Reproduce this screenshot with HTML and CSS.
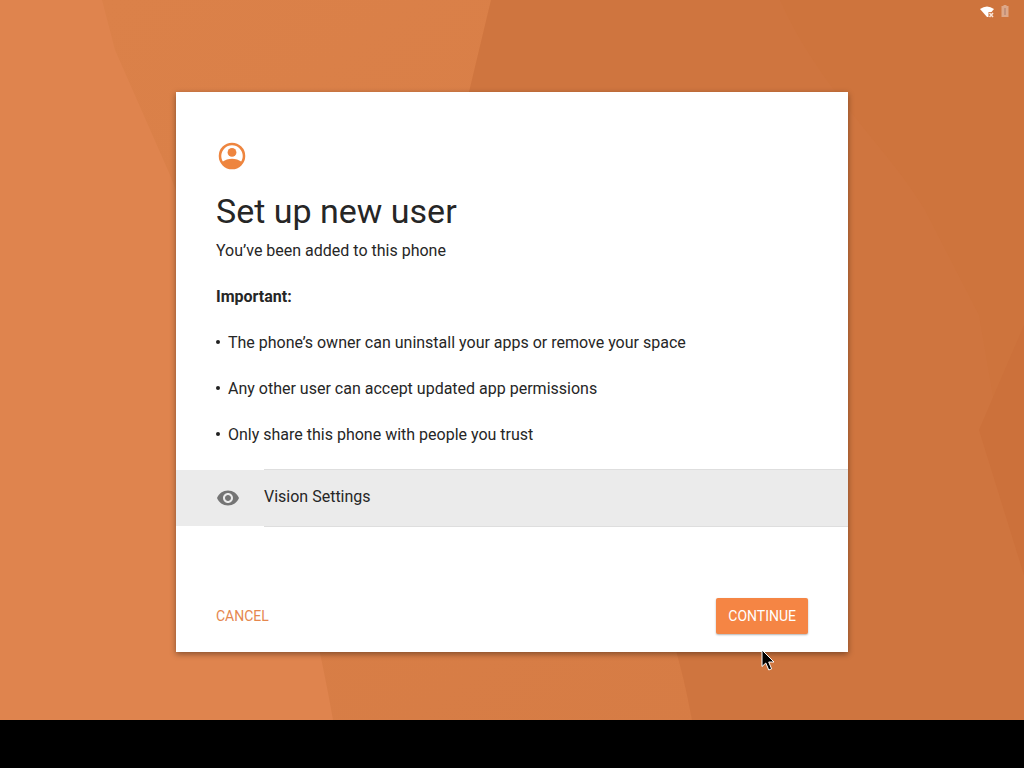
FILE: index.html
```html
<!DOCTYPE html>
<html lang="en">
<head>
<meta charset="utf-8">
<meta name="viewport" content="width=device-width, initial-scale=1">
<title>Set up new user</title>
<link rel="stylesheet" href="styles.css">
</head>
<body class="screen">
<svg class="wallpaper" viewBox="0 0 1024 720" preserveAspectRatio="none" aria-hidden="true">
  <defs>
    <linearGradient id="mid" x1="0" y1="0" x2="1" y2="1">
      <stop offset="0" stop-color="#db8149"/>
      <stop offset="1" stop-color="#d57b44"/>
    </linearGradient>
  </defs>
  <rect width="1024" height="720" fill="#df844e"/>
  <path d="M102 0L115 50L170 175C235 345 302 540 333 720H1024V0Z" fill="url(#mid)"/>
  <path d="M491 0L469 92L440 190C560 380 660 540 692 720H1024V0Z" fill="#cf753f"/>
  <path d="M780 0C820 90 890 150 925 210L979 315L1024 575V0Z" fill="#ce743d"/>
  <path d="M1024 325L979 430L1024 575Z" fill="#cc713b"/>
</svg>
<header class="status-bar">
  <svg class="status-icon" viewBox="0 0 16 16" width="16" height="16" role="img" aria-label="No Wi-Fi connection">
    <path d="M1 6Q8 1 15 6L12.500 9H9.500V14L8 14Z" fill="#fff"/>
    <path d="M10.500 10L14 14M14 10L10.500 14" stroke="#fbe5d8" stroke-width="1.500"/>
  </svg>
  <svg class="status-icon" viewBox="0 0 8 16" width="8" height="16" role="img" aria-label="Battery unknown">
    <path d="M2.500 2H5.500V3H7.500V14H.5V3H2.500Z" fill="#dda788"/>
    <path d="M4 5V12" stroke="#b98a76" stroke-width="1.500"/>
  </svg>
</header>
<main class="stage">
  <section class="card" aria-labelledby="title">
    <div class="content">
      <svg class="user-icon" viewBox="0 0 24 24" width="32" height="32" aria-hidden="true">
        <circle cx="12" cy="12" r="9" fill="none" stroke="currentColor" stroke-width="1.900"/>
        <circle cx="12" cy="9.300" r="3.300" fill="currentColor"/>
        <path d="M4.500 16.500C6.500 14.900 9.700 14 12 14S17.500 14.900 19.500 16.500C18 20 15 21.500 12 21.500S6 20 4.500 16.500Z" fill="currentColor"/>
      </svg>
      <h1 class="title" id="title">Set up new user</h1>
      <p class="text">You’ve been added to this phone</p>
      <p class="text important">Important:</p>
      <ul class="notes">
        <li class="note">The phone’s owner can uninstall your apps or remove your space</li>
        <li class="note">Any other user can accept updated app permissions</li>
        <li class="note">Only share this phone with people you trust</li>
      </ul>
    </div>
    <button class="setting" type="button">
      <span class="setting-icon">
        <svg viewBox="0 0 24 24" width="24" height="24" aria-hidden="true">
          <path fill="currentColor" d="M12 4.500C7 4.500 2.730 7.610 1 12c1.730 4.390 6 7.500 11 7.500s9.270-3.110 11-7.500c-1.730-4.390-6-7.500-11-7.500zM12 17c-2.760 0-5-2.240-5-5s2.240-5 5-5 5 2.240 5 5-2.240 5-5 5zm0-8c-1.660 0-3 1.340-3 3s1.340 3 3 3 3-1.340 3-3-1.340-3-3-3z"/>
        </svg>
      </span>
      <span class="setting-label">Vision Settings</span>
    </button>
    <footer class="actions">
      <button class="button" type="button">CANCEL</button>
      <button class="button primary" type="button">CONTINUE</button>
    </footer>
  </section>
</main>
<div class="nav-bar"></div>
<svg class="cursor" viewBox="0 0 14 22" width="14" height="22" aria-hidden="true">
  <path d="M1 1V17.500L4.800 14L7.800 21L10.600 19.800L7.700 13H13Z" fill="#000" stroke="#fff" stroke-width="1"/>
</svg>
</body>
</html>
```

FILE: styles.css
```css
* {
  box-sizing: border-box;
}

.screen {
  position: relative;
  display: flex;
  flex-direction: column;
  min-height: 100vh;
  margin: 0;
  background: #000;
  color: #262626;
  font-family: Roboto, "Liberation Sans", sans-serif;
  font-size: 16px;
  line-height: 23px;
}

.wallpaper {
  position: absolute;
  top: 0;
  left: 0;
  z-index: -1;
  width: 100%;
  height: calc(100% - 48px);
}

.status-bar {
  display: flex;
  align-items: center;
  justify-content: flex-end;
  gap: 6px;
  height: 24px;
  padding: 0 15px 2px;
}

.status-icon {
  display: block;
}

.stage {
  display: flex;
  flex: 1;
  align-items: center;
  justify-content: center;
  padding: 16px;
}

.card {
  display: flex;
  flex-direction: column;
  width: 100%;
  max-width: 672px;
  min-height: 560px;
  padding: 48px 0 18px;
  background: #fff;
  box-shadow: 0 2px 6px rgba(0, 0, 0, 0.4);
}

.content {
  padding: 0 40px;
}

.user-icon {
  display: block;
  color: #ee853f;
}

.title {
  margin: 16px 0 5px;
  font-size: 34px;
  font-weight: 400;
  line-height: 46px;
}

.text {
  margin: 0 0 23px;
}

.important {
  font-weight: 700;
}

.notes {
  margin: 0;
  padding: 0;
  list-style: none;
}

.note {
  display: flex;
  margin-bottom: 23px;
}

.note::before {
  flex: none;
  width: 4px;
  height: 4px;
  margin: 9px 8px 0 0;
  border-radius: 50%;
  background: #212121;
  content: "";
}

.setting {
  display: flex;
  width: 100%;
  padding: 0;
  border: 0;
  background: none;
  color: inherit;
  font: inherit;
  text-align: left;
}

.setting-icon {
  display: flex;
  align-items: center;
  width: 88px;
  margin: 1px 0;
  padding-left: 40px;
  background: #ebebeb;
  color: #757575;
}

.setting-label {
  flex: 1;
  padding: 15px 0 18px;
  border: solid #dedede;
  border-width: 1px 0;
  background: #ebebeb;
}

.actions {
  display: flex;
  justify-content: space-between;
  margin-top: auto;
  padding: 0 40px;
}

.button {
  height: 36px;
  padding: 0;
  border: 0;
  background: none;
  color: #e5874e;
  font: inherit;
  font-size: 14px;
}

.primary {
  padding: 0 12px;
  border-radius: 2px;
  background: #f58544;
  box-shadow: 0 1px 2px rgba(0, 0, 0, 0.3);
  color: #fff;
}

.nav-bar {
  height: 48px;
  background: #000;
}

.cursor {
  position: absolute;
  top: 649px;
  left: 761px;
  pointer-events: none;
}
```
